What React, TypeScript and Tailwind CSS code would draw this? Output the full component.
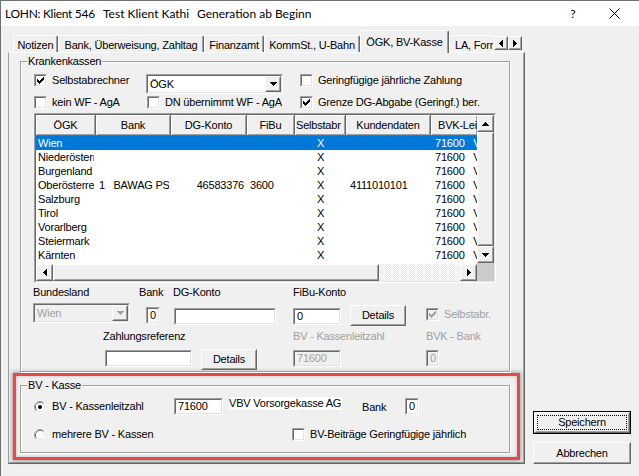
import React from "react";

const SO = "border border-t-[#a0a0a0] border-l-[#a0a0a0] border-r-white border-b-white";
const SI = "border border-t-[#696969] border-l-[#696969] border-r-[#e3e3e3] border-b-[#e3e3e3]";
const RO = "border border-t-white border-l-white border-r-[#696969] border-b-[#696969]";
const RI = "border border-t-[#f0f0f0] border-l-[#f0f0f0] border-r-[#a0a0a0] border-b-[#a0a0a0]";

type P = { className?: string; inner?: string; children?: React.ReactNode };

function Sunken({ className = "", inner = "bg-white", children }: P) {
  return (
    <div className={`${SO} shrink-0 ${className}`}>
      <div className={`${SI} w-full h-full overflow-hidden ${inner}`}>{children}</div>
    </div>
  );
}

function Raised({ className = "", inner = "", children }: P) {
  return (
    <div className={`${RO} bg-[#f0f0f0] shrink-0 ${className}`}>
      <div className={`${RI} w-full h-full ${inner}`}>{children}</div>
    </div>
  );
}

const TRI: Record<string, number[][]> = {
  down: [[0, 0, 7, 1], [1, 1, 5, 1], [2, 2, 3, 1], [3, 3, 1, 1]],
  up: [[3, 0, 1, 1], [2, 1, 3, 1], [1, 2, 5, 1], [0, 3, 7, 1]],
  left: [[3, 0, 1, 7], [2, 1, 1, 5], [1, 2, 1, 3], [0, 3, 1, 1]],
  right: [[0, 0, 1, 7], [1, 1, 1, 5], [2, 2, 1, 3], [3, 3, 1, 1]],
};

function Tri({ dir, color = "#000" }: { dir: string; color?: string }) {
  const v = dir === "up" || dir === "down";
  return (
    <svg width={v ? 7 : 4} height={v ? 4 : 7} shapeRendering="crispEdges" className="block">
      {TRI[dir].map(([x, y, w, h], i) => (
        <rect key={i} x={x} y={y} width={w} height={h} fill={color} />
      ))}
    </svg>
  );
}

const CHECK = [[6, 0, 1, 1], [5, 1, 2, 1], [0, 2, 1, 1], [4, 2, 3, 1], [0, 3, 2, 1], [3, 3, 3, 1], [0, 4, 5, 1], [1, 5, 3, 1], [2, 6, 1, 1]];

function CheckBox({ checked, disabled }: { checked?: boolean; disabled?: boolean }) {
  return (
    <Sunken className="w-[13px] h-[13px]" inner={disabled ? "bg-[#f0f0f0]" : "bg-white"}>
      {checked && (
        <svg width="7" height="7" shapeRendering="crispEdges" className="block ml-[1px] mt-[1px]">
          {CHECK.map(([x, y, w, h], i) => (
            <rect key={i} x={x} y={y} width={w} height={h} fill={disabled ? "#a0a0a0" : "#000"} />
          ))}
        </svg>
      )}
    </Sunken>
  );
}

function CheckItem({ checked, disabled, label }: { checked?: boolean; disabled?: boolean; label: string }) {
  return (
    <div className="flex items-center gap-[5px] h-[13px] whitespace-nowrap">
      <CheckBox checked={checked} disabled={disabled} />
      <span className={disabled ? "text-[#a0a0a0]" : ""}>{label}</span>
    </div>
  );
}

function Radio({ checked }: { checked?: boolean }) {
  return (
    <svg width="12" height="12" className="block shrink-0">
      <path d="M2.11 9.89 A5.5 5.5 0 0 1 9.89 2.11" stroke="#a0a0a0" fill="none" />
      <path d="M9.89 2.11 A5.5 5.5 0 0 1 2.11 9.89" stroke="#ffffff" fill="none" />
      <path d="M2.82 9.18 A4.5 4.5 0 0 1 9.18 2.82" stroke="#696969" fill="none" />
      <path d="M9.18 2.82 A4.5 4.5 0 0 1 2.82 9.18" stroke="#e3e3e3" fill="none" />
      <circle cx="6" cy="6" r="4" fill="#ffffff" />
      {checked && <circle cx="6" cy="6" r="2" fill="#000" />}
    </svg>
  );
}

function RadioItem({ checked, label }: { checked?: boolean; label: string }) {
  return (
    <div className="flex items-center gap-[6px] h-[13px] whitespace-nowrap">
      <Radio checked={checked} />
      <span>{label}</span>
    </div>
  );
}

function Input({ className = "", value = "", disabled }: { className?: string; value?: string; disabled?: boolean }) {
  return (
    <Sunken
      className={`h-[17px] ${className}`}
      inner={`${disabled ? "bg-[#f0f0f0] text-[#a0a0a0]" : "bg-white"} pl-[2px] leading-[13px] whitespace-nowrap`}
    >
      {value}
    </Sunken>
  );
}

function Combo({ className = "", text, disabled }: { className?: string; text: string; disabled?: boolean }) {
  return (
    <Sunken
      className={`h-[20px] ${className}`}
      inner={`${disabled ? "bg-[#f0f0f0] text-[#a0a0a0]" : "bg-white"} flex items-center`}
    >
      <span className="flex-1 pl-[2px] pt-[1px] whitespace-nowrap">{text}</span>
      <Raised className="w-[16px] h-[16px]" inner="flex items-center justify-center">
        <Tri dir="down" color={disabled ? "#a0a0a0" : "#000"} />
      </Raised>
    </Sunken>
  );
}

function Btn({ className = "", def, children }: { className?: string; def?: boolean; children: React.ReactNode }) {
  const body = (
    <div className={`${RO} bg-[#f0f0f0] w-full h-full`}>
      <div className={`${RI} w-full h-full flex items-center justify-center`}>
        {def ? (
          <div className="flex-1 self-stretch m-[1px] border border-dotted border-black flex items-center justify-center">
            {children}
          </div>
        ) : (
          children
        )}
      </div>
    </div>
  );
  return def ? (
    <div className={`border border-black shrink-0 ${className}`}>{body}</div>
  ) : (
    <div className={`shrink-0 ${className}`}>{body}</div>
  );
}

function Group({ label, className = "", children }: { label: string; className?: string; children?: React.ReactNode }) {
  return (
    <div className={`relative border border-[#a0a0a0] shadow-[inset_1px_1px_0_#fff,1px_1px_0_#fff] flex flex-col shrink-0 ${className}`}>
      <span className="absolute left-[6px] -top-[7px] bg-[#f0f0f0] px-[1px] leading-[13px] whitespace-nowrap">{label}</span>
      {children}
    </div>
  );
}

function Tab({ className = "", children }: { className?: string; children: React.ReactNode }) {
  return (
    <div
      className={`h-[17px] shrink-0 border-t border-l border-r border-t-white border-l-white border-r-[#696969] rounded-t-[2px] shadow-[inset_-1px_0_0_#a0a0a0] flex justify-center pt-[3px] whitespace-nowrap ${className}`}
    >
      {children}
    </div>
  );
}

const HC =
  "h-full shrink-0 overflow-hidden whitespace-nowrap border-b border-b-[#696969] shadow-[inset_1px_1px_0_#fff,inset_-1px_-1px_0_#a0a0a0] flex items-center bg-[#f0f0f0]";

const COLS = [
  "w-[60px] pl-[2px] pr-[2px]",
  "w-[75px] pl-[3px] pr-[2px]",
  "w-[76px] pr-[3px] text-right",
  "w-[48px] pl-[3px]",
  "w-[51px] text-center",
  "w-[85px] pl-[4px]",
  "w-[46px] pl-[4px]",
];

const ROWS = [
  ["Wien", "", "", "", "X", "", "71600   VBV Vorsorgekasse AG"],
  ["Niederösterreich", "", "", "", "X", "", "71600   VBV Vorsorgekasse AG"],
  ["Burgenland", "", "", "", "X", "", "71600   VBV Vorsorgekasse AG"],
  ["Oberösterreich", "1   BAWAG PSK", "46583376", "3600", "X", "4111010101", "71600   VBV Vorsorgekasse AG"],
  ["Salzburg", "", "", "", "X", "", "71600   VBV Vorsorgekasse AG"],
  ["Tirol", "", "", "", "X", "", "71600   VBV Vorsorgekasse AG"],
  ["Vorarlberg", "", "", "", "X", "", "71600   VBV Vorsorgekasse AG"],
  ["Steiermark", "", "", "", "X", "", "71600   VBV Vorsorgekasse AG"],
  ["Kärnten", "", "", "", "X", "", "71600   VBV Vorsorgekasse AG"],
];

function ListView() {
  return (
    <div className={`${SO} ml-[13px] mt-[4px] w-[462px] h-[170px] shrink-0`}>
      <div className={`${SI} w-full h-full bg-white flex`}>
        <div className="w-[441px] flex flex-col">
          <div className="h-[21px] flex shrink-0">
            <div className={`${HC} w-[60px] justify-center border-r border-r-[#696969]`}>ÖGK</div>
            <div className={`${HC} w-[75px] justify-center border-r border-r-[#696969]`}>Bank</div>
            <div className={`${HC} w-[76px] justify-center border-r border-r-[#696969]`}>DG-Konto</div>
            <div className={`${HC} w-[48px] justify-center border-r border-r-[#696969]`}>FiBu</div>
            <div className={`${HC} w-[51px] pl-[1px] border-r border-r-[#696969]`}>Selbstabr</div>
            <div className={`${HC} w-[85px] justify-center border-r border-r-[#696969]`}>Kundendaten</div>
            <div className={`${HC} w-[46px] pl-[7px]`}>BVK-Leitzahl</div>
          </div>
          {ROWS.map((r, i) => (
            <div key={i} className={`h-[14px] flex leading-[14px] shrink-0 ${i === 0 ? "bg-[#0078d7] text-white" : ""}`}>
              {r.map((c, j) => (
                <div key={j} className={`shrink-0 ${COLS[j]}`}>
                  <div className="w-full overflow-hidden whitespace-pre">{c}</div>
                </div>
              ))}
            </div>
          ))}
          <div className="flex-1" />
          <div className="h-[17px] flex shrink-0">
            <Raised className="w-[17px] h-[17px]" inner="flex items-center justify-center">
              <Tri dir="left" />
            </Raised>
            <Raised className="w-[326px] h-[17px]" />
            <div className="w-[81px] h-[17px] bg-[image:repeating-conic-gradient(#ffffff_0%_25%,#e9e9e9_0%_50%)] bg-[length:2px_2px]" />
            <Raised className="w-[17px] h-[17px]" inner="flex items-center justify-center">
              <Tri dir="right" />
            </Raised>
          </div>
        </div>
        <div className="w-[17px] flex flex-col">
          <Raised className="w-[17px] h-[17px]" inner="flex items-center justify-center">
            <Tri dir="up" />
          </Raised>
          <Raised className="w-[17px] h-[114px]" />
          <Raised className="w-[17px] h-[17px]" inner="flex items-center justify-center">
            <Tri dir="down" />
          </Raised>
          <div className="w-[17px] h-[18px] bg-[#cbcbcb]" />
        </div>
      </div>
    </div>
  );
}

function Krankenkassen() {
  return (
    <Group label="Krankenkassen" className="ml-[11px] mt-[8px] w-[490px] h-[311px]">
      <div className="flex items-start mt-[12px] h-[20px]">
        <div className="ml-[13px] w-[112px] shrink-0">
          <CheckItem checked label="Selbstabrechner" />
        </div>
        <Combo className="w-[137px]" text="ÖGK" />
        <div className="ml-[17px]">
          <CheckItem label="Geringfügige jährliche Zahlung" />
        </div>
      </div>
      <div className="flex items-start mt-[2px] h-[13px]">
        <div className="ml-[13px] w-[113px] shrink-0">
          <CheckItem label="kein WF - AgA" />
        </div>
        <div className="w-[153px] shrink-0">
          <CheckItem label="DN übernimmt WF - AgA" />
        </div>
        <CheckItem checked label="Grenze DG-Abgabe (Geringf.) ber." />
      </div>
      <ListView />
      <div className="flex mt-[3px] h-[13px] ml-[12px] whitespace-nowrap">
        <span className="w-[106px] shrink-0">Bundesland</span>
        <span className="w-[34px] shrink-0">Bank</span>
        <span className="w-[120px] shrink-0">DG-Konto</span>
        <span>FiBu-Konto</span>
      </div>
      <div className="flex items-start mt-[4px] h-[23px] ml-[12px]">
        <Combo className="w-[97px]" text="Wien" disabled />
        <Input className="ml-[16px] mt-[4px] w-[14px]" value="0" />
        <Input className="ml-[14px] mt-[5px] w-[102px]" />
        <Input className="ml-[17px] mt-[5px] w-[48px]" value="0" />
        <Btn className="ml-[9px] mt-[2px] w-[56px] h-[21px]">Details</Btn>
        <div className="ml-[20px] mt-[5px]">
          <CheckItem checked disabled label="Selbstabr." />
        </div>
      </div>
      <div className="flex mt-[4px] h-[13px] ml-[82px] whitespace-nowrap">
        <span className="w-[190px] shrink-0">Zahlungsreferenz</span>
        <span className="w-[133px] shrink-0 text-[#a0a0a0]">BV - Kassenleitzahl</span>
        <span className="text-[#a0a0a0]">BVK - Bank</span>
      </div>
      <div className="flex items-start mt-[6px] h-[21px] ml-[84px]">
        <Input className="mt-[1px] w-[87px]" />
        <Btn className="ml-[9px] w-[56px] h-[21px]">Details</Btn>
        <Input className="ml-[36px] mt-[1px] w-[48px]" value="71600" disabled />
        <Input className="ml-[85px] mt-[1px] w-[13px]" value="0" disabled />
      </div>
    </Group>
  );
}

function BVKasse() {
  return (
    <div className="ml-[4px] mt-[1px] w-[507px] h-[87px] shrink-0 border-[3px] border-[#e84848] shadow-[0_0_4px_1px_rgba(0,0,0,0.35),inset_0_0_3px_0_rgba(0,0,0,0.25)] flex flex-col">
      <Group label="BV - Kasse" className="ml-[4px] mt-[9px] w-[490px] h-[68px]">
        <div className="flex items-start mt-[11px] h-[18px]">
          <div className="ml-[13px] w-[140px] mt-[3px] shrink-0">
            <RadioItem checked label="BV - Kassenleitzahl" />
          </div>
          <Input className="mt-[1px] w-[49px]" value="71600" />
          <span className="ml-[6px] w-[113px] h-[13px] bg-white whitespace-nowrap shrink-0">VBV Vorsorgekasse AG</span>
          <span className="ml-[20px] w-[43px] mt-[4px] shrink-0">Bank</span>
          <Input className="mt-[1px] w-[14px]" value="0" />
        </div>
        <div className="flex items-start mt-[13px] h-[13px]">
          <div className="ml-[13px] w-[258px] shrink-0">
            <RadioItem label="mehrere BV - Kassen" />
          </div>
          <CheckItem label="BV-Beiträge Geringfügige jährlich" />
        </div>
      </Group>
    </div>
  );
}

function TabControl() {
  return (
    <div className="ml-[7px] mt-[4px] w-[517px] shrink-0">
      <div className="flex items-end h-[22px] pl-[5px]">
        <Tab className="w-[45px]">Notizen</Tab>
        <Tab className="w-[146px]">Bank, Überweisung, Zahltag</Tab>
        <Tab className="w-[60px]">Finanzamt</Tab>
        <Tab className="w-[96px]">KommSt., U-Bahn</Tab>
        <div className="relative z-10 -mb-px w-[89px] h-[23px] shrink-0 bg-[#f0f0f0] border-t border-l border-r border-t-white border-l-white border-r-[#696969] rounded-t-[2px] shadow-[inset_-1px_0_0_#a0a0a0] flex justify-center pt-[5px] whitespace-nowrap">
          ÖGK, BV-Kasse
        </div>
        <div className="w-[44px] h-[17px] shrink-0 border-t border-l border-t-white border-l-white rounded-tl-[2px] overflow-hidden whitespace-nowrap pl-[5px] pt-[3px]">
          LA, Formulare
        </div>
        <div className="self-start mt-[6px] ml-[1px] flex">
          <Raised className="w-[14px] h-[14px]" inner="flex items-center justify-center">
            <Tri dir="left" />
          </Raised>
          <Raised className="w-[14px] h-[14px]" inner="flex items-center justify-center">
            <Tri dir="right" />
          </Raised>
        </div>
      </div>
      <div className="w-[517px] h-[412px] border border-t-white border-l-[#a0a0a0] border-r-[#696969] border-b-[#696969] shadow-[inset_-1px_-1px_0_#a0a0a0] flex flex-col">
        <Krankenkassen />
        <BVKasse />
      </div>
    </div>
  );
}

export default function App() {
  return (
    <div className="w-[639px] h-[476px] overflow-hidden bg-[#f0f0f0] border-t border-l border-[#707070] font-['Liberation_Sans',Arial,sans-serif] text-[11px] leading-[13px] tracking-[-0.2px] text-black">
      <div className="h-[25px] bg-white flex items-center font-['Lato',sans-serif] text-[12px] tracking-normal whitespace-nowrap">
        <span className="ml-[4px] w-[98px] shrink-0 tracking-[-0.3px]">LOHN: Klient 546</span>
        <span className="w-[94px] shrink-0">Test Klient Kathi</span>
        <span>Generation ab Beginn</span>
        <span className="flex-1" />
        <span className="w-[8px] text-center">?</span>
        <svg width="11" height="11" className="ml-[32px] mr-[19px] block">
          <path d="M0.5 0.5 L10.5 10.5 M10.5 0.5 L0.5 10.5" stroke="#000" strokeWidth="1" />
        </svg>
      </div>
      <div className="flex items-start">
        <TabControl />
        <div className="ml-[8px] mt-[385px] flex flex-col gap-[8px]">
          <Btn def className="w-[98px] h-[23px]">
            Speichern
          </Btn>
          <Btn className="w-[98px] h-[22px]">Abbrechen</Btn>
        </div>
      </div>
    </div>
  );
}
